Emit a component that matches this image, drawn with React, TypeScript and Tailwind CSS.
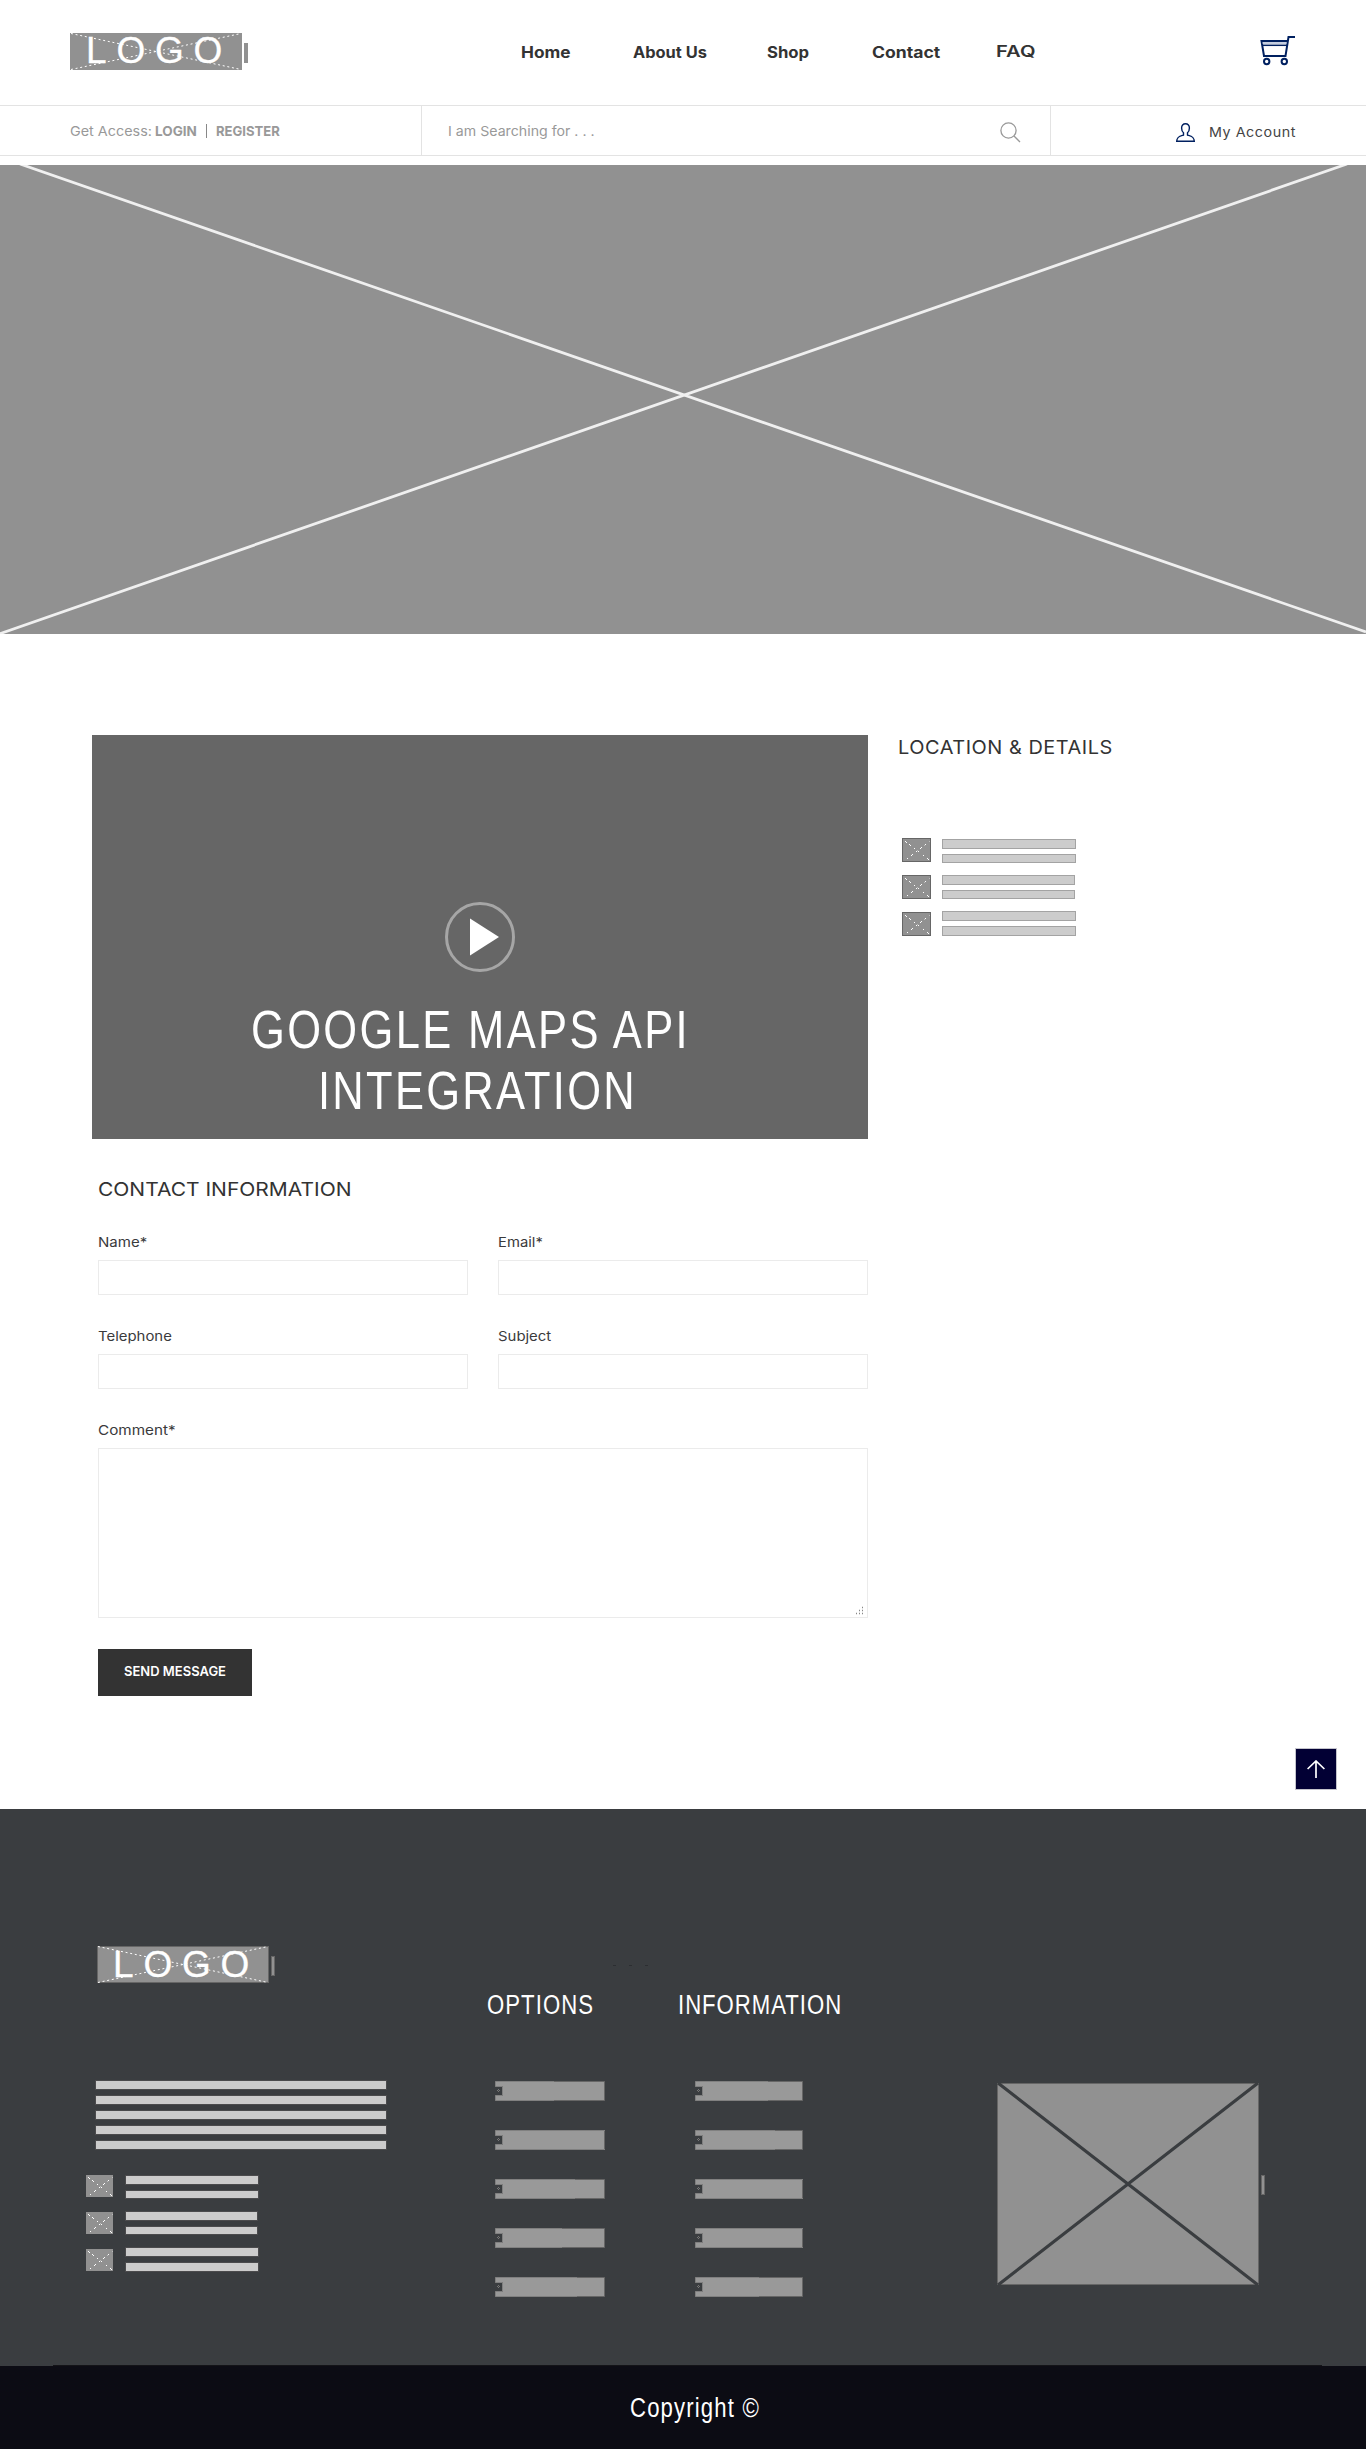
import { useLayoutEffect, useRef, useState } from "react";

/** One line of text whose glyphs are stretched so that it spans `width` pixels. */
function Line({ text, width, className = "" }: { text: string; width: number; className?: string }) {
  const ref = useRef<HTMLSpanElement>(null);
  const [scale, setScale] = useState(1);
  useLayoutEffect(() => {
    if (ref.current) {
      setScale(width / ref.current.offsetWidth);
    }
  }, [text, width]);
  return (
    <span className={`inline-block shrink-0 whitespace-pre ${className}`} style={{ width }}>
      <span ref={ref} className="inline-block origin-left" style={{ transform: `scaleX(${scale})` }}>
        {text}
      </span>
    </span>
  );
}

function Logo({ outlined = false }: { outlined?: boolean }) {
  return (
    <svg width="178" height="37" viewBox="0 0 178 37" className="block shrink-0 overflow-visible">
      <rect width="172" height="37" fill="#919191" />
      {outlined && <rect x="0.5" y="0.5" width="171" height="36" fill="none" stroke="#666" />}
      <rect x="174" y="10" width="4" height="20" fill="#919191" />
      {outlined && <rect x="174.5" y="10.5" width="3" height="19" fill="none" stroke="#666" />}
      <path d="M1 .5L171 36.5M1 36.5L171 .5" stroke="#fff" strokeWidth="1" strokeDasharray="2 2.7" />
      <text
        y={outlined ? 30.5 : 30}
        x="16 46.5 85 123.500"
        fontSize="37"
        fill="#fff"
        stroke="#fff"
        strokeWidth="0.3"
        className="font-['Liberation_Sans',sans-serif]"
      >
        LOGO
      </text>
    </svg>
  );
}

function Thumb({ outlined = false }: { outlined?: boolean }) {
  return (
    <svg
      width={outlined ? 29 : 27}
      height={outlined ? 24 : 22}
      viewBox={outlined ? "0 0 29 24" : "1 1 27 22"}
      className="block shrink-0"
    >
      <rect width="29" height="24" fill="#919191" />
      {outlined && <rect x="0.5" y="0.5" width="28" height="23" fill="none" stroke="#666" />}
      <path
        d="M3 3.500h1M4 4.500h1M7 6.500h1M8 7.500h1M12 10.500h1M14 13.500h1M16 13.500h1M21 17.500h1M25 20.500h1M26 21.500h1M23 6.500h1M19 9.500h1M18 10.500h1M10 16.500h1M9 17.500h1M5 20.500h1"
        stroke="#fff"
      />
      <path d="M27 3.500h1M22 7.500h1M15 12.500h1" stroke="#bbb" />
    </svg>
  );
}

function ContactRows() {
  return (
    <div className="ml-[22px] mt-[80px] flex flex-col gap-[13px]">
      {["w-[134px]", "w-[133px]", "w-[134px]"].map((w, i) => (
        <div key={i} className="flex h-6 gap-[11px]">
          <Thumb outlined />
          <div className={`flex flex-col gap-[5px] ${i === 0 ? "pt-px" : i === 1 ? "pt-0" : "-mt-px"}`}>
            <div className={`h-2.5 shrink-0 border border-[#a3a3a3] bg-[#ccc] ${w}`} />
            <div className={`shrink-0 border border-[#a3a3a3] bg-[#ccc] ${w} ${i === 2 ? "h-2.5" : "h-[9px]"}`} />
          </div>
        </div>
      ))}
    </div>
  );
}

function Field({ label, width }: { label: string; width: number }) {
  return (
    <label className="block h-[94px] w-[370px]">
      <div className="h-[29px] text-[13.5px] leading-[22px] text-[#3a3a3c]">
        <Line text={label} width={width} />
      </div>
      <input className="block h-[35px] w-full border border-[#ebebeb] bg-white outline-none" />
    </label>
  );
}

function LinkBars({ x, widths }: { x: number; widths: number[] }) {
  return (
    <div className="flex flex-col gap-[29px]">
      {widths.map((w, i) => (
        <svg key={i} width={x} height="20" viewBox={`0 0 ${x} 20`} className="block">
          <path d={`M.5 .5H${x - 0.5}V19.500H.5V14.500H7.500V5.500H.5Z`} fill="#999" stroke="#666" />
          <path d={`M${w} .5H.5V5.500H7.500V14.500H.5V19.500H${w}`} fill="none" stroke="#808080" />
          <path d="M0 6H7V14H0Z" fill="#3a3d40" />
          <path d="M3 8.500h1M2 9.500h1M4 9.500h1M3 10.500h1" stroke="#777" />
        </svg>
      ))}
    </div>
  );
}

const condensed = "inline-block origin-left scale-x-[0.82] whitespace-nowrap font-['Liberation_Sans',sans-serif] text-white";

export default function App() {
  return (
    <div className="h-[2449px] w-[1366px] overflow-hidden bg-white font-[Inter,sans-serif] text-[#3a3a3c]">
      <header>
        <div className="flex h-[105px] items-start">
          <div className="ml-[70px] mt-[33px] w-[451px]">
            <Logo />
          </div>
          <nav className="mt-[41px] flex h-6 text-[15.5px] font-bold leading-[23px] text-[#333]">
            <Line text="Home" width={49} className="mr-[63px]" />
            <Line text="About Us" width={74} className="mr-[59.5px]" />
            <Line text="Shop" width={42} className="mr-[63px]" />
            <Line text="Contact" width={68} className="mr-[56px]" />
            <Line text="FAQ" width={39} className="-mt-px font-semibold" />
          </nav>
          <svg width="36" height="30" viewBox="0 0 36 30" fill="none" stroke="#002060" className="ml-[225.500px] mt-9">
            <path d="M35 1H28.500L25.500 20H4L1.500 5H28" strokeWidth="2" />
            <path d="M2 9.300H27" strokeWidth="1.500" />
            <path d="M2 7H27" stroke="#8a9cc0" strokeWidth="1" />
            <circle cx="6.700" cy="25.500" r="2.700" strokeWidth="2" />
            <circle cx="24.300" cy="25.500" r="2.700" strokeWidth="2" />
          </svg>
        </div>
        <div className="flex h-[51px] border-y border-[#e3e3e3] text-[13.5px] leading-[20px] text-[#999]">
          <div className="flex w-[422px] border-r border-[#e3e3e3] pl-[70px] pt-[15px]">
            <Line text="Get Access:" width={82} className="mr-[3px]" />
            <Line text="LOGIN" width={42} className="font-bold" />
            <div className="ml-[9px] mr-[9px] mt-[3px] h-3.5 w-px bg-[#888]" />
            <Line text="REGISTER" width={64} className="font-bold" />
          </div>
          <div className="flex w-[629px] border-r border-[#e3e3e3] pl-[26px] pt-[15px]">
            <Line text="I am Searching for . . ." width={147} className="mr-[405px]" />
            <svg width="21" height="21" viewBox="0 0 21 21" fill="none" stroke="#999" strokeWidth="1.300" className="mt-px">
              <circle cx="8.500" cy="8.500" r="7.600" />
              <path d="M14 14L20 20" />
            </svg>
          </div>
          <div className="flex pl-[125px] pt-4">
            <svg width="19" height="19" viewBox="0 0 19 19" fill="none" stroke="#002060" strokeWidth="1.400" className="mt-px">
              <path d="M9.500 .8C7 .8 5.600 2.500 5.600 5C5.600 7.200 6.300 8.800 7.500 9.800V12C4.500 13 .8 13.500 .7 18.300H18.300C18.200 13.500 14.500 13 11.500 12V9.800C12.700 8.800 13.400 7.200 13.400 5C13.400 2.500 12 .8 9.500 .8Z" />
            </svg>
            <Line text="My Account" width={87} className="ml-3.5 tracking-[0.5px] text-[#444]" />
          </div>
        </div>
      </header>

      <svg width="1366" height="469" viewBox="0 0 1366 469" className="mt-[9px] block bg-[#919191]">
        <path d="M20 -1L1366 467M-1 469L1347 -1" stroke="#f0f0f0" strokeWidth="2.800" />
      </svg>

      <main className="flex h-[1175px] pl-[92px] pt-[101px]">
        <div className="w-[776px]">
          <div className="flex h-[404px] flex-col bg-[#666] pt-[167px]">
            <svg width="70" height="70" viewBox="0 0 70 70" className="ml-[353px]">
              <circle cx="35" cy="35" r="33.500" fill="none" stroke="#a6a6a6" strokeWidth="3" />
              <path d="M25 16.500L54 35L25 53.500Z" fill="#fff" />
            </svg>
            <div className="ml-[158.500px] mt-[27px] h-[61px] text-[53px] leading-[61px] tracking-[2.9px]">
              <span className={condensed}>GOOGLE MAPS API</span>
            </div>
            <div className="ml-[225.500px] h-[61px] text-[53px] leading-[61px] tracking-[2.8px]">
              <span className={condensed}>INTEGRATION</span>
            </div>
          </div>

          <form className="ml-1.5 pt-[37px]">
            <h2 className="h-[55px] text-[19px] font-normal leading-[28px] text-[#333]">
              <Line text="CONTACT INFORMATION" width={254} />
            </h2>
            <div className="grid grid-cols-[370px_370px] gap-x-[30px]">
              <Field label="Name*" width={49} />
              <Field label="Email*" width={45} />
              <Field label="Telephone" width={74} />
              <Field label="Subject" width={53} />
            </div>
            <label className="relative block">
              <div className="h-[29px] text-[13.5px] leading-[22px] text-[#3a3a3c]">
                <Line text="Comment*" width={78} />
              </div>
              <textarea className="block h-[170px] w-[770px] resize-none border border-[#ebebeb] bg-white outline-none" />
              <svg width="9" height="9" viewBox="0 0 9 9" className="absolute bottom-[3px] right-1">
                <path d="M7 1.500h1M4 4.500h1M7 4.500h1M1 7.500h1M4 7.500h1M7 7.500h1" stroke="#888" strokeWidth="1.500" />
              </svg>
            </label>
            <button type="button" className="mt-[31px] flex h-[47px] w-[154px] bg-[#333] pl-[26px] pt-3">
              <Line text="SEND MESSAGE" width={102} className="text-left text-[13.500px] font-semibold leading-5 text-white" />
            </button>
          </form>
        </div>

        <aside className="relative w-[498px]">
          <h2 className="-mt-px ml-[30px] h-6 text-[19px] font-normal leading-[28px] text-[#333]">
            <Line text="LOCATION &amp; DETAILS" width={215} className="tracking-[0.5px]" />
          </h2>
          <div className="ml-3">
            <ContactRows />
          </div>
          <button
            type="button"
            aria-label="Back to top"
            className="absolute bottom-[19px] right-[29px] flex size-[42px] items-center justify-center border border-[#c4c4cc] bg-[#020034]"
          >
            <svg width="18" height="18" viewBox="0 0 18 18" fill="none" stroke="#fff" strokeWidth="1.700">
              <path d="M9 18V1M.6 9L9 1L17.400 9" />
            </svg>
          </button>
        </aside>
      </main>

      <footer>
        <div className="flex h-[557px] bg-[#3a3d40]">
          <section className="w-[488px] pl-[86px] pt-[137px]">
            <div className="ml-[11px]">
              <Logo outlined />
            </div>
            <div className="ml-[9px] mt-[97px] flex flex-col gap-[5px]">
              {[0, 1, 2, 3, 4].map((i) => (
                <div key={i} className="h-2.5 w-[292px] border border-[#4b4b4d] bg-[#ccc]" />
              ))}
            </div>
            <div className="mt-[25px] flex flex-col gap-[15px]">
              {["w-[134px]", "w-[133px]", "w-[134px]"].map((w, i) => (
                <div key={i} className="flex h-[22px] gap-3">
                  <Thumb />
                  <div className={`flex flex-col gap-[5px] ${i === 1 ? "-mt-px" : i === 2 ? "-mt-[2px]" : ""}`}>
                    <div className={`h-2.5 shrink-0 border border-[#4b4b4d] bg-[#ccc] ${w}`} />
                    <div
                      className={`shrink-0 border border-[#4b4b4d] bg-[#ccc] ${w} ${i === 2 ? "h-2.5" : "h-[9px]"}`}
                    />
                  </div>
                </div>
              ))}
            </div>
          </section>
          <section className="w-[192px] pt-[180px]">
            <h3 className="-ml-px mb-[61px] h-[31px] text-[27px] leading-[31px] tracking-[1.300px]">
              <span className={condensed}>OPTIONS</span>
            </h3>
            <div className="ml-[7px]">
              <LinkBars x={110} widths={[59, 110, 80, 67, 82]} />
            </div>
          </section>
          <section className="w-[317px] pt-[156px]">
            <svg width="120" height="2" viewBox="0 0 120 2" className="-ml-[67px] mb-[22px] block">
              <path d="M0 .5h3M16 .5h3M32 .5h3" stroke="#2c2e31" />
            </svg>
            <h3 className="-ml-[2px] mb-[61px] h-[31px] text-[27px] leading-[31px] tracking-[1.200px]">
              <span className={condensed}>INFORMATION</span>
            </h3>
            <div className="ml-[15px]">
              <LinkBars x={108} widths={[73, 80, 109, 109, 64]} />
            </div>
          </section>
          <section className="pt-[274px]">
            <svg width="268" height="202" viewBox="0 0 268 202" className="block">
              <rect x="0.500" y="0.500" width="261" height="201" fill="#919191" stroke="#666" />
              <path d="M1 0L261 202M1 202L261 0" stroke="#3a3d40" strokeWidth="3.200" />
              <rect x="264.500" y="92.500" width="3" height="19" fill="#919191" stroke="#666" />
            </svg>
          </section>
        </div>
        <div className="relative h-[83px] bg-[#0c0c14] pl-[630px] pt-[26px]">
          <div className="absolute -top-px left-[53px] h-px w-[1269px] bg-[#141418]" />
          <p className="text-[27px] leading-[31px] tracking-[1.400px]">
            <span className={condensed}>Copyright ©</span>
          </p>
        </div>
      </footer>
    </div>
  );
}
